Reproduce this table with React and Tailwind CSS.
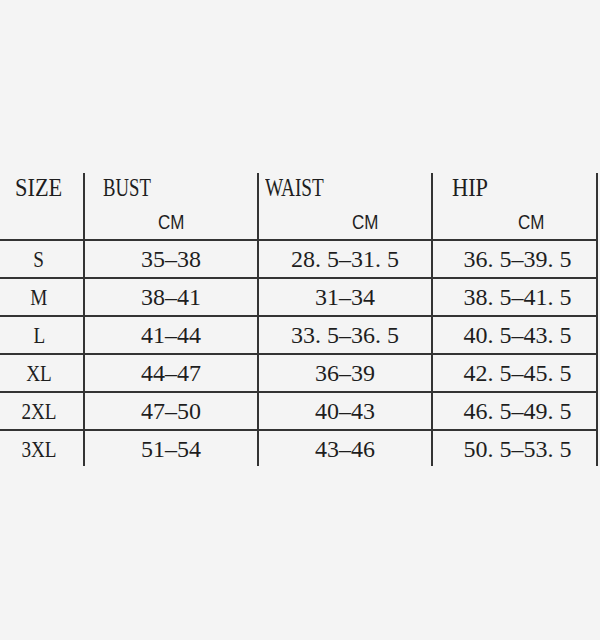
import React from "react";

const rows = [
  ["S", "35–38", "28. 5–31. 5", "36. 5–39. 5"],
  ["M", "38–41", "31–34", "38. 5–41. 5"],
  ["L", "41–44", "33. 5–36. 5", "40. 5–43. 5"],
  ["XL", "44–47", "36–39", "42. 5–45. 5"],
  ["2XL", "47–50", "40–43", "46. 5–49. 5"],
  ["3XL", "51–54", "43–46", "50. 5–53. 5"],
];

const serif = "font-['Liberation_Serif','Times_New_Roman',serif]";
const sans = "font-['Liberation_Sans',Arial,sans-serif]";

export default function App() {
  return (
    <div className="w-[600px] h-[640px] bg-[#f4f4f4] text-[#1e1e1e] overflow-hidden">
      <div className="pt-[173px] w-[598px]">
        {/* header */}
        <div className="grid grid-cols-[83px_174px_174px_167px] h-[68px] border-b-2 border-[#333]">
          <div className={`pt-[2px] pl-[15px] ${serif} text-[26px] leading-none`}>
            <span className="inline-block origin-left scale-x-[0.86]">SIZE</span>
          </div>
          <div className="border-l-2 border-[#333] pt-[2px] pl-[18px] flex flex-col items-start">
            <span className={`inline-block origin-left scale-x-[0.72] ${serif} text-[26px] leading-none`}>BUST</span>
            <span className={`inline-block origin-left scale-x-[0.85] mt-[11px] ml-[55px] ${sans} text-[20px] leading-none`}>CM</span>
          </div>
          <div className="border-l-2 border-[#333] pt-[2px] pl-[6px] flex flex-col items-start">
            <span className={`inline-block origin-left scale-x-[0.74] ${serif} text-[26px] leading-none`}>WAIST</span>
            <span className={`inline-block origin-left scale-x-[0.85] mt-[11px] ml-[87px] ${sans} text-[20px] leading-none`}>CM</span>
          </div>
          <div className="border-l-2 border-r-2 border-[#333] pt-[2px] pl-[19px] flex flex-col items-start">
            <span className={`inline-block origin-left scale-x-[0.86] ${serif} text-[26px] leading-none`}>HIP</span>
            <span className={`inline-block origin-left scale-x-[0.85] mt-[11px] ml-[66px] ${sans} text-[20px] leading-none`}>CM</span>
          </div>
        </div>
        {/* data */}
        {rows.map((r, i) => {
          const last = i === rows.length - 1;
          return (
            <div
              key={r[0]}
              className={`grid grid-cols-[83px_174px_174px_167px] ${serif} text-[24px] leading-none ${
                last ? "h-[35px]" : "h-[38px] border-b-2 border-[#333]"
              }`}
            >
              <div className="flex items-center justify-center pr-[5px]">
                <span className="inline-block scale-x-[0.8]">{r[0]}</span>
              </div>
              <div className="border-l-2 border-[#333] flex items-center justify-center">{r[1]}</div>
              <div className="border-l-2 border-[#333] flex items-center justify-center">{r[2]}</div>
              <div className="border-l-2 border-r-2 border-[#333] flex items-center justify-center pl-[6px]">{r[3]}</div>
            </div>
          );
        })}
      </div>
    </div>
  );
}
